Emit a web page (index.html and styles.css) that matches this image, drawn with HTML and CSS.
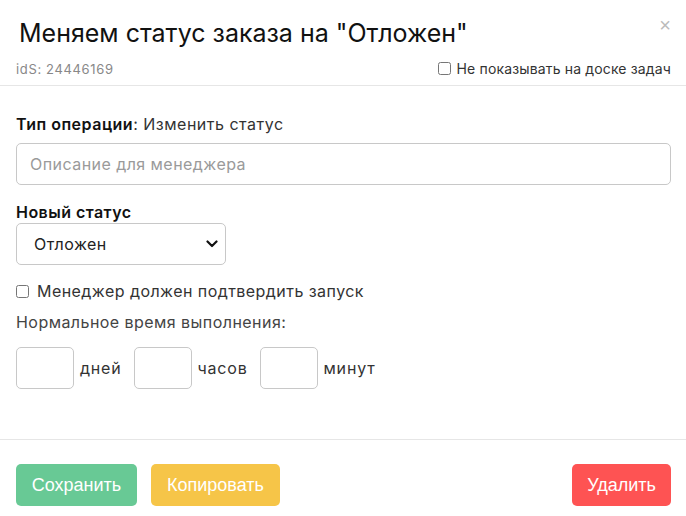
FILE: index.html
```html
<!DOCTYPE html>
<html lang="ru">
<head>
<meta charset="utf-8">
<title>Меняем статус заказа</title>
<link rel="stylesheet" href="styles.css">
</head>
<body>
<div class="modal">
  <header class="modal-header">
    <div class="title-row">
      <h1 class="title">Меняем статус заказа на "Отложен"</h1>
      <span class="close">×</span>
    </div>
    <div class="sub-row">
      <span class="ids">idS: 24446169</span>
      <label class="hide-check"><input type="checkbox" class="cb"> Не показывать на доске задач</label>
    </div>
  </header>
  <main class="modal-body">
    <div class="op-line"><b>Тип операции</b>: Изменить статус</div>
    <input class="text-input" type="text" placeholder="Описание для менеджера">
    <div class="field-label">Новый статус</div>
    <div class="select-wrap">
      <div class="select">Отложен</div>
      <svg class="chev" width="12" height="8" viewBox="0 0 12 8"><path d="M1.5 1.5 L6 6 L10.5 1.5" fill="none" stroke="#111" stroke-width="2.2" stroke-linecap="round" stroke-linejoin="round"/></svg>
    </div>
    <label class="confirm"><input type="checkbox" class="cb"> Менеджер должен подтвердить запуск</label>
    <div class="norm">Нормальное время выполнения:</div>
    <div class="time-row">
      <input class="small-input" type="text"><span class="unit">дней</span>
      <input class="small-input" type="text"><span class="unit">часов</span>
      <input class="small-input" type="text"><span class="unit">минут</span>
    </div>
  </main>
  <footer class="modal-footer">
    <div class="left-btns">
      <button class="btn btn-save">Сохранить</button>
      <button class="btn btn-copy">Копировать</button>
    </div>
    <button class="btn btn-del">Удалить</button>
  </footer>
</div>
</body>
</html>
```
FILE: styles.css
```css
* { box-sizing: border-box; }
html, body { margin: 0; padding: 0; background: #fff; }
body {
  font-family: Inter, "Noto Sans", sans-serif;
  color: #222;
  width: 686px;
  height: 516px;
  overflow: hidden;
}
.modal { width: 686px; }
.modal-header {
  padding: 17px 15px 8px 16px;
  border-bottom: 1px solid #e6e6e6;
}
.title-row {
  display: flex;
  justify-content: space-between;
  align-items: flex-start;
}
.title {
  margin: 0 0 0 3px;
  font-size: 25px;
  font-weight: 400;
  line-height: 32px;
  color: #111;
  letter-spacing: 0;
}
.close {
  color: #bbb;
  font-size: 20px;
  line-height: 16px;
  margin-top: 0;
  margin-right: 0;
  font-family: "Liberation Sans", Arial, sans-serif;
}
.sub-row {
  display: flex;
  justify-content: space-between;
  align-items: center;
  margin-top: 11px;
}
.ids { font-size: 13px; color: #888; letter-spacing: 0.65px; }
.hide-check {
  font-size: 14px;
  color: #333;
  display: flex;
  align-items: center;
  letter-spacing: 0.15px;
}
.cb {
  width: 13px;
  height: 13px;
  margin: 0 6px 0 0;
}
.modal-body {
  padding: 28px 15px 50px 16px;
  display: flex;
  flex-direction: column;
}
.op-line { font-size: 16px; line-height: 20px; color: #333; letter-spacing: 0.5px; }
.op-line b { font-weight: 600; color: #111; }
.text-input {
  margin-top: 9px;
  width: 655px;
  height: 42px;
  border: 1px solid #c8c8c8;
  border-radius: 5px;
  padding: 0 13px;
  font-family: inherit;
  font-size: 16px;
  letter-spacing: 0.45px;
  color: #333;
  outline: none;
}
.text-input::placeholder { color: #9a9a9a; }
.field-label {
  margin-top: 17px;
  font-size: 16px;
  font-weight: 600;
  line-height: 20px;
  color: #111;
  letter-spacing: 0.45px;
}
.select-wrap {
  position: relative;
  width: 210px;
  height: 42px;
  margin-top: 1px;
}
.select {
  height: 42px;
  border: 1px solid #c8c8c8;
  border-radius: 5px;
  padding: 0 17px;
  display: flex;
  align-items: center;
  font-size: 16px;
  color: #222;
  letter-spacing: 0.45px;
}
.chev { position: absolute; right: 8px; top: 17px; }
.confirm {
  margin-top: 16px;
  font-size: 16px;
  color: #333;
  display: flex;
  align-items: center;
  line-height: 20px;
  letter-spacing: 0.45px;
}
.confirm .cb { margin-right: 8px; }
.norm {
  margin-top: 11px;
  font-size: 16px;
  color: #444;
  line-height: 20px;
  letter-spacing: 0.45px;
}
.time-row {
  margin-top: 15px;
  display: flex;
  align-items: center;
}
.small-input {
  width: 58px;
  height: 42px;
  border: 1px solid #c8c8c8;
  border-radius: 5px;
  outline: none;
  padding: 0 6px;
  font-family: inherit;
}
.unit {
  font-size: 16px;
  color: #333;
  margin: 0 12px 0 6px;
  letter-spacing: 0.8px;
}
.modal-footer {
  border-top: 1px solid #e6e6e6;
  padding: 24px 15px 10px 16px;
  display: flex;
  justify-content: space-between;
}
.left-btns { display: flex; gap: 14px; }
.btn {
  height: 42px;
  border: none;
  border-radius: 5px;
  color: #fff;
  font-family: "Liberation Sans", Arial, sans-serif;
  font-size: 18px;
  padding: 0 10px;
}
.btn-save { background: #68c995; width: 121px; }
.btn-copy { background: #f6c548; width: 129px; }
.btn-del { background: #fe5353; width: 99px; }
```
